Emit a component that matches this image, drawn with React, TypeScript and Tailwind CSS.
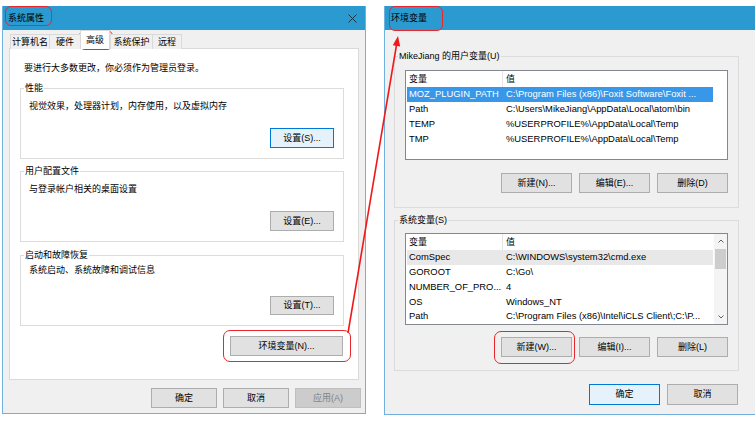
import React from "react";

const FONT = "font-['Liberation_Sans','Noto_Sans_CJK_SC',sans-serif]";

type BtnProps = {
  children: React.ReactNode;
  className?: string;
  focus?: boolean;
  disabled?: boolean;
};

function Btn({ children, className = "", focus = false, disabled = false }: BtnProps) {
  const tone = focus
    ? "border-[#0078d7] bg-[#e5f1fb] text-black"
    : disabled
    ? "border-[#bfbfbf] bg-[#cccccc] text-[#838383]"
    : "border-[#adadad] bg-[#e1e1e1] text-black";
  return (
    <div className={`flex shrink-0 items-center justify-center border text-[9px] leading-none ${tone} ${className}`}>
      {children}
    </div>
  );
}

function Group({
  label,
  className = "",
  legendBg = "",
  children,
}: {
  label: string;
  className?: string;
  legendBg?: string;
  children: React.ReactNode;
}) {
  return (
    <fieldset className={`border border-[#dcdcdc] ${className}`}>
      <legend className={`ml-[3px] px-[1px] text-[9px] leading-[12px] text-black ${legendBg}`}>{label}</legend>
      {children}
    </fieldset>
  );
}

function TitleBar({ title, close = false, className = "" }: { title: string; close?: boolean; className?: string }) {
  return (
    <div className={`flex h-[24px] shrink-0 items-center justify-between bg-[#2b9ad0] ${className}`}>
      <span className="text-[9px] leading-none text-black">{title}</span>
      {close ? (
        <svg width="9" height="9" viewBox="0 0 9 9" className="mr-[8px]">
          <path d="M0.5 0.5 L8.5 8.5 M8.5 0.5 L0.5 8.5" stroke="#1e3442" strokeWidth="1" fill="none" />
        </svg>
      ) : null}
    </div>
  );
}

type Row = [string, string];

function ListView({
  rows,
  selected,
  selectedTone,
  scrollbar = false,
  className = "",
}: {
  rows: Row[];
  selected: number;
  selectedTone: "blue" | "grey";
  scrollbar?: boolean;
  className?: string;
}) {
  return (
    <div className={`flex w-[323px] overflow-hidden border border-[#828790] bg-white ${className}`}>
      <div className="flex w-[308px] shrink-0 flex-col">
        <div className="flex h-[16px] shrink-0 items-center text-[9px] leading-none text-black">
          <div className="flex h-full w-[97px] items-center border-r border-[#e5e5e5] pl-[3px]">变量</div>
          <div className="pl-[3px]">值</div>
        </div>
        {rows.map(([name, value], i) => {
          const sel = i === selected;
          const bg = sel ? (selectedTone === "blue" ? "bg-[#3897e8] text-white" : "bg-[#e8e8e8] text-black") : "text-black";
          return (
            <div key={name} className={`ml-px flex h-[14.75px] w-[306px] shrink-0 items-center text-[9.4px] leading-[12px] ${bg}`}>
              <div className="w-[96px] shrink-0 whitespace-nowrap pl-[2px]">{name}</div>
              <div className="whitespace-nowrap pl-[3px]">{value}</div>
            </div>
          );
        })}
      </div>
      {scrollbar ? (
        <div className="ml-auto flex w-[14px] flex-col items-center bg-[#f4f4f4]">
          <svg width="8" height="14" viewBox="0 0 8 14" className="shrink-0">
            <path d="M1.5 8.5 L4 6 L6.5 8.5" stroke="#606060" strokeWidth="1" fill="none" />
          </svg>
          <div className="mt-[1px] h-[20px] w-[11px] bg-[#cdcdcd]" />
          <div className="flex-1" />
          <svg width="8" height="14" viewBox="0 0 8 14" className="shrink-0">
            <path d="M1.5 5.5 L4 8 L6.5 5.5" stroke="#606060" strokeWidth="1" fill="none" />
          </svg>
        </div>
      ) : null}
    </div>
  );
}

function SystemProperties() {
  const tabs = ["计算机名", "硬件", "高级", "系统保护", "远程"];
  const widths = ["w-[40px]", "w-[32px]", "w-[30px]", "w-[43px]", "w-[30px]"];
  return (
    <div className="ml-[2px] flex h-[408px] w-[364px] shrink-0 flex-col border-x border-b border-[#6fb0dc]">
      <TitleBar title="系统属性" close className="pl-[5px]" />
      <div className="flex flex-1 flex-col bg-[#f0f0f0] pl-[6px] pr-[6px]">
        <div className="relative z-10 -mb-px flex h-[19px] items-end pl-[1px]">
          {tabs.map((t, i) =>
            i === 2 ? (
              <div
                key={t}
                className={`flex h-[19px] items-center justify-center border-x border-t border-[#d9d9d9] bg-white text-[9px] leading-none text-black ${widths[i]}`}
              >
                {t}
              </div>
            ) : (
              <div
                key={t}
                className={`-mr-px flex h-[15px] items-center justify-center border border-b-0 border-[#d9d9d9] bg-[#f0f0f0] text-[9px] leading-none text-black ${widths[i]}`}
              >
                {t}
              </div>
            )
          )}
        </div>
        <div className="flex h-[332px] w-[350px] flex-col border border-[#d9d9d9] bg-white">
          <p className="ml-[14px] mt-[13px] text-[9px] leading-[12px] text-black">要进行大多数更改，你必须作为管理员登录。</p>
          <div className="ml-[10px] flex w-[324px] flex-col">
            <Group label="性能" legendBg="bg-white" className="mt-[8px] h-[77px]">
              <div className="flex h-[64px] flex-col pb-[10px] pl-[8px] pr-[9px] pt-[6px]">
                <p className="text-[9px] leading-[12px] text-black">视觉效果，处理器计划，内存使用，以及虚拟内存</p>
                <Btn focus className="mt-auto h-[20px] w-[64px] self-end">设置(S)...</Btn>
              </div>
            </Group>
            <Group label="用户配置文件" legendBg="bg-white" className="mt-[6px] h-[77px]">
              <div className="flex h-[64px] flex-col pb-[10px] pl-[8px] pr-[9px] pt-[6px]">
                <p className="text-[9px] leading-[12px] text-black">与登录帐户相关的桌面设置</p>
                <Btn className="mt-auto h-[20px] w-[64px] self-end">设置(E)...</Btn>
              </div>
            </Group>
            <Group label="启动和故障恢复" legendBg="bg-white" className="mt-[7px] h-[77px]">
              <div className="flex h-[64px] flex-col pb-[10px] pl-[8px] pr-[9px] pt-[3px]">
                <p className="text-[9px] leading-[12px] text-black">系统启动、系统故障和调试信息</p>
                <Btn className="mt-auto h-[19px] w-[64px] self-end">设置(T)...</Btn>
              </div>
            </Group>
            <Btn className="mr-[1px] mt-[10px] h-[20px] w-[113px] self-end">环境变量(N)...</Btn>
          </div>
        </div>
        <div className="mt-[8px] flex justify-end gap-[6px]">
          <Btn className="h-[20px] w-[66px]">确定</Btn>
          <Btn className="h-[20px] w-[66px]">取消</Btn>
          <Btn disabled className="-mr-[2px] h-[20px] w-[66px]">应用(A)</Btn>
        </div>
      </div>
    </div>
  );
}

function EnvironmentVariables() {
  const userRows: Row[] = [
    ["MOZ_PLUGIN_PATH", "C:\\Program Files (x86)\\Foxit Software\\Foxit ..."],
    ["Path", "C:\\Users\\MikeJiang\\AppData\\Local\\atom\\bin"],
    ["TEMP", "%USERPROFILE%\\AppData\\Local\\Temp"],
    ["TMP", "%USERPROFILE%\\AppData\\Local\\Temp"],
  ];
  const sysRows: Row[] = [
    ["ComSpec", "C:\\WINDOWS\\system32\\cmd.exe"],
    ["GOROOT", "C:\\Go\\"],
    ["NUMBER_OF_PRO...", "4"],
    ["OS", "Windows_NT"],
    ["Path", "C:\\Program Files (x86)\\Intel\\iCLS Client\\;C:\\P..."],
  ];
  return (
    <div className="ml-[18px] flex h-[409px] w-[372px] shrink-0 flex-col border-l border-b border-[#6fb0dc]">
      <TitleBar title="环境变量" className="pl-[6px]" />
      <div className="flex flex-1 flex-col bg-[#f0f0f0] pl-[9px] pt-[20px]">
        <div className="flex w-[345px] flex-col">
          <Group label="MikeJiang 的用户变量(U)" className="h-[158px]">
            <div className="flex flex-col px-[10px] pt-[8px]">
              <ListView rows={userRows} selected={0} selectedTone="blue" className="h-[90px]" />
              <div className="mt-[13px] flex justify-end gap-[7px]">
                <Btn className="h-[20px] w-[71px]">新建(N)...</Btn>
                <Btn className="h-[20px] w-[71px]">编辑(E)...</Btn>
                <Btn className="h-[20px] w-[71px]">删除(D)</Btn>
              </div>
            </div>
          </Group>
          <Group label="系统变量(S)" className="mt-[6px] h-[157px]">
            <div className="flex flex-col px-[10px] pt-[7px]">
              <ListView rows={sysRows} selected={0} selectedTone="grey" scrollbar className="h-[92px]" />
              <div className="mt-[12px] flex justify-end gap-[7px]">
                <Btn className="h-[20px] w-[71px]">新建(W)...</Btn>
                <Btn className="h-[20px] w-[71px]">编辑(I)...</Btn>
                <Btn className="h-[20px] w-[71px]">删除(L)</Btn>
              </div>
            </div>
          </Group>
          <div className="mt-[13px] flex justify-end gap-[7px] pr-[1px]">
            <Btn focus className="h-[21px] w-[71px]">确定</Btn>
            <Btn className="h-[21px] w-[71px]">取消</Btn>
          </div>
        </div>
      </div>
    </div>
  );
}

export default function App() {
  return (
    <div className={`relative flex h-[421px] w-[755px] items-start overflow-hidden bg-white pt-[6px] ${FONT}`}>
      <SystemProperties />
      <EnvironmentVariables />

      {/* red annotations drawn over the screenshot */}
      <div className="pointer-events-none absolute left-[5px] top-[6px] h-[20px] w-[47px] rounded-[6px] border-[1.5px] border-[#e8262b]" />
      <div className="pointer-events-none absolute left-[79px] top-[30px] h-[20px] w-[34px] rounded-[6px] border-[1.5px] border-[#e8262b]" />
      <div className="pointer-events-none absolute left-[389px] top-[6px] h-[25px] w-[54px] rounded-[6px] border-[1.5px] border-[#e8262b]" />
      <div className="pointer-events-none absolute left-[223px] top-[330px] h-[32px] w-[128px] rounded-[7px] border-[1.5px] border-[#e8262b]" />
      <div className="pointer-events-none absolute left-[494px] top-[331px] h-[33px] w-[81px] rounded-[7px] border-[1.5px] border-[#e8262b]" />
      <svg className="pointer-events-none absolute left-0 top-0" width="755" height="421" viewBox="0 0 755 421">
        <line x1="348" y1="333" x2="396.5" y2="45" stroke="#f01818" strokeWidth="1.6" />
        <polygon points="398,36 400.2,46.6 392.8,45.3" fill="#f01818" />
      </svg>
    </div>
  );
}
